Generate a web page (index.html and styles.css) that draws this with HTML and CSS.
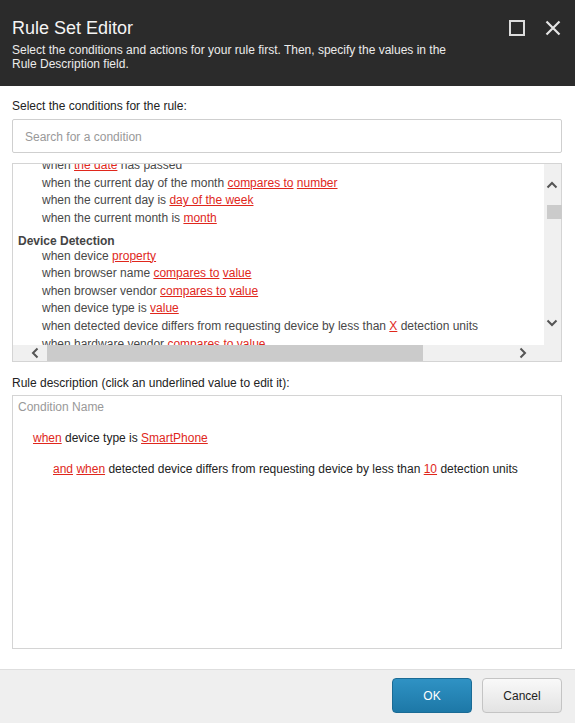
FILE: index.html
```html
<!DOCTYPE html>
<html>
<head>
<meta charset="utf-8">
<link rel="stylesheet" href="styles.css">
</head>
<body>
<div class="dialog">
  <header class="head">
    <div class="head-text">
      <h1 class="title">Rule Set Editor</h1>
      <p class="subtitle">Select the conditions and actions for your rule first. Then, specify the values in the Rule Description field.</p>
    </div>
    <div class="head-icons">
      <svg class="icon" width="16" height="16" viewBox="0 0 16 16"><rect x="1" y="1" width="14" height="14" fill="none" stroke="#dcdcdc" stroke-width="2"/></svg>
      <svg class="icon" width="16" height="16" viewBox="0 0 16 16"><path d="M1.5 1.5 L14.5 14.5 M14.5 1.5 L1.5 14.5" stroke="#e4e4e4" stroke-width="2.2" fill="none"/></svg>
    </div>
  </header>

  <main class="body">
    <div class="label">Select the conditions for the rule:</div>
    <div class="search">Search for a condition</div>

    <div class="listbox">
      <div class="list-view">
        <div class="list-content">
          <div class="item">when <a class="v">the date</a> has passed</div>
          <div class="item">when the current day of the month <a class="v">compares to</a> <a class="v">number</a></div>
          <div class="item">when the current day is <a class="v">day of the week</a></div>
          <div class="item">when the current month is <a class="v">month</a></div>
          <div class="cat">Device Detection</div>
          <div class="item">when device <a class="v">property</a></div>
          <div class="item">when browser name <a class="v">compares to</a> <a class="v">value</a></div>
          <div class="item">when browser vendor <a class="v">compares to</a> <a class="v">value</a></div>
          <div class="item">when device type is <a class="v">value</a></div>
          <div class="item">when detected device differs from requesting device by less than <a class="v">X</a> detection units</div>
          <div class="item">when hardware vendor <a class="v">compares to</a> <a class="v">value</a></div>
          <div class="item">when hardware model <a class="v">compares to</a> <a class="v">value</a></div>
        </div>
      </div>
      <div class="vbar">
        <svg class="chev-up" width="12" height="8" viewBox="0 0 12 8"><polyline points="1.5,6.5 6,2 10.5,6.5" fill="none" stroke="#555" stroke-width="2"/></svg>
        <div class="vthumb"></div>
        <div class="vspace"></div>
        <svg class="chev-down" width="12" height="8" viewBox="0 0 12 8"><polyline points="1.5,1.5 6,6 10.5,1.5" fill="none" stroke="#555" stroke-width="2"/></svg>
      </div>
      <div class="hbar">
        <svg class="chev-left" width="8" height="12" viewBox="0 0 8 12"><polyline points="6.5,1.5 2,6 6.5,10.5" fill="none" stroke="#555" stroke-width="2"/></svg>
        <div class="hthumb"></div>
        <div class="hspace"></div>
        <svg class="chev-right" width="8" height="12" viewBox="0 0 8 12"><polyline points="1.5,1.5 6,6 1.5,10.5" fill="none" stroke="#555" stroke-width="2"/></svg>
      </div>
      <div class="corner"></div>
    </div>

    <div class="label label-desc">Rule description (click an underlined value to edit it):</div>
    <div class="descbox">
      <div class="cond-name">Condition Name</div>
      <div class="rule-line"><a class="v">when</a> device type is <a class="v">SmartPhone</a></div>
      <div class="rule-line sub"><a class="v">and</a> <a class="v">when</a> detected device differs from requesting device by less than <a class="v">10</a> detection units</div>
    </div>
  </main>

  <footer class="foot">
    <button class="btn btn-ok">OK</button>
    <button class="btn btn-cancel">Cancel</button>
  </footer>
</div>
</body>
</html>
```

FILE: styles.css
```css
* { box-sizing: border-box; }
html, body { margin: 0; padding: 0; }
body {
  width: 575px;
  height: 723px;
  overflow: hidden;
  font-family: "Liberation Sans", Arial, sans-serif;
  font-size: 12px;
  color: #333;
  background: #fff;
}
.dialog {
  display: flex;
  flex-direction: column;
  height: 723px;
}
.head {
  height: 86px;
  background: #2b2b2b;
  display: flex;
  justify-content: space-between;
  padding: 17px 14px 0 12px;
}
.title {
  margin: 0;
  font-size: 18px;
  line-height: 22px;
  font-weight: normal;
  color: #f4f4f4;
}
.subtitle {
  margin: 4px 0 0;
  width: 455px;
  font-size: 12px;
  line-height: 14px;
  color: #ececec;
}
.head-icons {
  display: flex;
  gap: 20px;
  padding-top: 3px;
}
.icon { display: block; }

.body {
  flex: 1;
  padding: 0 13px 0 12px;
}
.label {
  margin-top: 13px;
  line-height: 14px;
  color: #222;
}
.search {
  margin-top: 6px;
  height: 34px;
  border: 1px solid #cfcfcf;
  border-radius: 2px;
  padding: 1px 12px 0;
  line-height: 32px;
  color: #999;
}
.listbox {
  margin-top: 10px;
  height: 199px;
  border: 1px solid #d4d4d4;
  display: grid;
  grid-template-columns: 1fr 17px;
  grid-template-rows: 1fr 16px;
}
.list-view {
  overflow: hidden;
  background: #fff;
}
.list-content {
  margin-top: -6.8px;
  padding-left: 5px;
  white-space: nowrap;
  color: #484848;
}
.item {
  padding-left: 24px;
  line-height: 17.6px;
}
.cat {
  margin-top: 6px;
  line-height: 14px;
  font-weight: bold;
  color: #444;
}
a.v {
  color: #e0271c;
  text-decoration: underline;
}
.vbar {
  background: #f0f0f0;
  display: flex;
  flex-direction: column;
  align-items: center;
  padding-top: 17px;
  padding-right: 5px;
  padding-left: 3px;
}
.chev-up { display: block; }
.vthumb {
  margin-top: 16px;
  width: 15px;
  height: 14px;
  margin-left: 5px;
  background: #cbcbcb;
}
.vspace { flex: 1; }
.chev-down { display: block; margin-bottom: 18px; }
.hbar {
  background: #f0f0f0;
  display: flex;
  align-items: center;
  padding-left: 18px;
}
.chev-left { display: block; }
.hthumb {
  margin-left: 8px;
  width: 376px;
  height: 16px;
  background: #cbcbcb;
}
.hspace { flex: 1; }
.chev-right { display: block; margin-right: 17px; }
.corner { background: #f0f0f0; }

.label-desc { margin-top: 14px; }
.descbox {
  margin-top: 5px;
  height: 254px;
  border: 1px solid #d4d4d4;
  padding: 4px 5px;
  white-space: nowrap;
}
.cond-name {
  line-height: 14px;
  color: #999;
}
.rule-line {
  margin-top: 17px;
  padding-left: 15px;
  line-height: 14px;
  color: #222;
}
.rule-line.sub { padding-left: 35px; }

.foot {
  height: 54px;
  background: #efefef;
  border-top: 1px solid #dedede;
  display: flex;
  justify-content: flex-end;
  align-items: flex-start;
  gap: 10px;
  padding: 8px 13px 0 0;
}
.btn {
  width: 80px;
  height: 35px;
  border-radius: 4px;
  font-family: "Liberation Sans", Arial, sans-serif;
  font-size: 12px;
  cursor: pointer;
}
.btn-ok {
  color: #fff;
  background: linear-gradient(#2f92c4, #1d78a7);
  border: 1px solid #1a6b95;
}
.btn-cancel {
  color: #222;
  background: linear-gradient(#f9f9f9, #e3e3e3);
  border: 1px solid #c4c4c4;
}
```
